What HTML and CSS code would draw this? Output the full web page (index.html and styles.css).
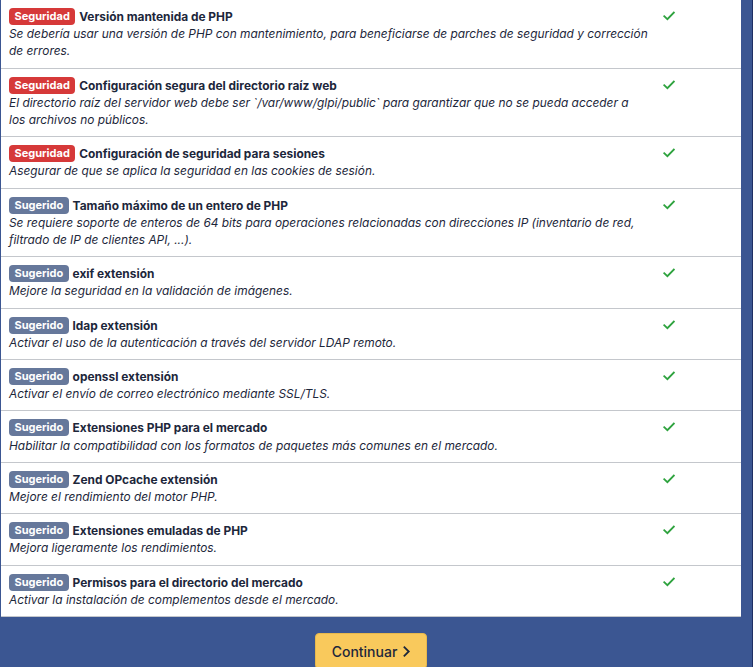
FILE: index.html
```html
<!DOCTYPE html>
<html lang="es">
<head>
<meta charset="utf-8">
<title>GLPI - Requisitos</title>
<link rel="stylesheet" href="styles.css">
</head>
<body>
<div class="frame">
  <div class="card">
    <div class="row">
      <div class="info">
        <div class="title"><span class="badge red">Seguridad</span> Versión mantenida de PHP</div>
        <div class="desc">Se debería usar una versión de PHP con mantenimiento, para beneficiarse de parches de seguridad y corrección de errores.</div>
      </div>
      <div class="state"><svg class="check" viewBox="0 0 12 10" width="12" height="10"><polyline points="1.2,5.2 4.4,8.2 10.8,1.6"/></svg></div>
    </div>
    <div class="row">
      <div class="info">
        <div class="title"><span class="badge red">Seguridad</span> Configuración segura del directorio raíz web</div>
        <div class="desc">El directorio raíz del servidor web debe ser `/var/www/glpi/public` para garantizar que no se pueda acceder a los archivos no públicos.</div>
      </div>
      <div class="state"><svg class="check" viewBox="0 0 12 10" width="12" height="10"><polyline points="1.2,5.2 4.4,8.2 10.8,1.6"/></svg></div>
    </div>
    <div class="row">
      <div class="info">
        <div class="title"><span class="badge red">Seguridad</span> Configuración de seguridad para sesiones</div>
        <div class="desc">Asegurar de que se aplica la seguridad en las cookies de sesión.</div>
      </div>
      <div class="state"><svg class="check" viewBox="0 0 12 10" width="12" height="10"><polyline points="1.2,5.2 4.4,8.2 10.8,1.6"/></svg></div>
    </div>
    <div class="row">
      <div class="info">
        <div class="title"><span class="badge gray">Sugerido</span> Tamaño máximo de un entero de PHP</div>
        <div class="desc">Se requiere soporte de enteros de 64 bits para operaciones relacionadas con direcciones IP (inventario de red, filtrado de IP de clientes API, ...).</div>
      </div>
      <div class="state"><svg class="check" viewBox="0 0 12 10" width="12" height="10"><polyline points="1.2,5.2 4.4,8.2 10.8,1.6"/></svg></div>
    </div>
    <div class="row">
      <div class="info">
        <div class="title"><span class="badge gray">Sugerido</span> exif extensión</div>
        <div class="desc">Mejore la seguridad en la validación de imágenes.</div>
      </div>
      <div class="state"><svg class="check" viewBox="0 0 12 10" width="12" height="10"><polyline points="1.2,5.2 4.4,8.2 10.8,1.6"/></svg></div>
    </div>
    <div class="row">
      <div class="info">
        <div class="title"><span class="badge gray">Sugerido</span> ldap extensión</div>
        <div class="desc">Activar el uso de la autenticación a través del servidor LDAP remoto.</div>
      </div>
      <div class="state"><svg class="check" viewBox="0 0 12 10" width="12" height="10"><polyline points="1.2,5.2 4.4,8.2 10.8,1.6"/></svg></div>
    </div>
    <div class="row">
      <div class="info">
        <div class="title"><span class="badge gray">Sugerido</span> openssl extensión</div>
        <div class="desc">Activar el envío de correo electrónico mediante SSL/TLS.</div>
      </div>
      <div class="state"><svg class="check" viewBox="0 0 12 10" width="12" height="10"><polyline points="1.2,5.2 4.4,8.2 10.8,1.6"/></svg></div>
    </div>
    <div class="row">
      <div class="info">
        <div class="title"><span class="badge gray">Sugerido</span> Extensiones PHP para el mercado</div>
        <div class="desc">Habilitar la compatibilidad con los formatos de paquetes más comunes en el mercado.</div>
      </div>
      <div class="state"><svg class="check" viewBox="0 0 12 10" width="12" height="10"><polyline points="1.2,5.2 4.4,8.2 10.8,1.6"/></svg></div>
    </div>
    <div class="row">
      <div class="info">
        <div class="title"><span class="badge gray">Sugerido</span> Zend OPcache extensión</div>
        <div class="desc">Mejore el rendimiento del motor PHP.</div>
      </div>
      <div class="state"><svg class="check" viewBox="0 0 12 10" width="12" height="10"><polyline points="1.2,5.2 4.4,8.2 10.8,1.6"/></svg></div>
    </div>
    <div class="row">
      <div class="info">
        <div class="title"><span class="badge gray">Sugerido</span> Extensiones emuladas de PHP</div>
        <div class="desc">Mejora ligeramente los rendimientos.</div>
      </div>
      <div class="state"><svg class="check" viewBox="0 0 12 10" width="12" height="10"><polyline points="1.2,5.2 4.4,8.2 10.8,1.6"/></svg></div>
    </div>
    <div class="row">
      <div class="info">
        <div class="title"><span class="badge gray">Sugerido</span> Permisos para el directorio del mercado</div>
        <div class="desc">Activar la instalación de complementos desde el mercado.</div>
      </div>
      <div class="state"><svg class="check" viewBox="0 0 12 10" width="12" height="10"><polyline points="1.2,5.2 4.4,8.2 10.8,1.6"/></svg></div>
    </div>
  </div>
  <div class="actions">
    <button class="btn" type="button">Continuar <svg class="chev" viewBox="0 0 10 14" width="9" height="13"><polyline points="2,1.5 7.5,7 2,12.5"/></svg></button>
  </div>
</div>
</body>
</html>
```

FILE: styles.css
```css
html, body {
  margin: 0;
  padding: 0;
  height: 100%;
  overflow: hidden;
}
body {
  background: #3b5692;
  font-family: Inter, "Noto Sans", sans-serif;
  color: #1d273b;
}
.frame {
  height: 667px;
  padding-left: 1px;
  padding-right: 11px;
  border-right: 1px solid #1e2f63;
  box-sizing: border-box;
  width: 753px;
}
.card {
  background: #fff;
  border-bottom: 1px solid #c4c7cc;
}
.row {
  display: grid;
  grid-template-columns: 655px 1fr;
  border-bottom: 1px solid #c4c7cc;
}
.row:last-child {
  border-bottom: 0;
}
.info {
  padding: 8px;
  font-size: 11.9px;
  line-height: 17.2px;
}
.title {
  font-weight: 700;
}
.desc {
  font-style: italic;
}
.badge {
  display: inline-block;
  color: #fff;
  font-size: 11px;
  font-weight: 700;
  line-height: 17px;
  padding: 0 5.5px;
  border-radius: 4px;
  vertical-align: top;
  margin-right: 1px;
}
.badge.red {
  background: #d63939;
}
.badge.gray {
  background: #66789b;
}
.state {
  padding: 11px 8px 0 7px;
}
.check {
  display: block;
  fill: none;
  stroke: #2fa33f;
  stroke-width: 1.8;
  stroke-linecap: square;
}
.actions {
  display: flex;
  justify-content: center;
  padding-top: 16px;
}
.btn {
  background: #f9c95c;
  border: 1px solid #e8b84c;
  border-radius: 4px;
  font-family: Inter, "Noto Sans", sans-serif;
  font-size: 14px;
  font-weight: 500;
  color: #1d273b;
  padding: 0 15px 0 16px;
  height: 36px;
  display: flex;
  align-items: center;
  gap: 5px;
}
.chev {
  fill: none;
  stroke: #1d273b;
  stroke-width: 2;
}
```
